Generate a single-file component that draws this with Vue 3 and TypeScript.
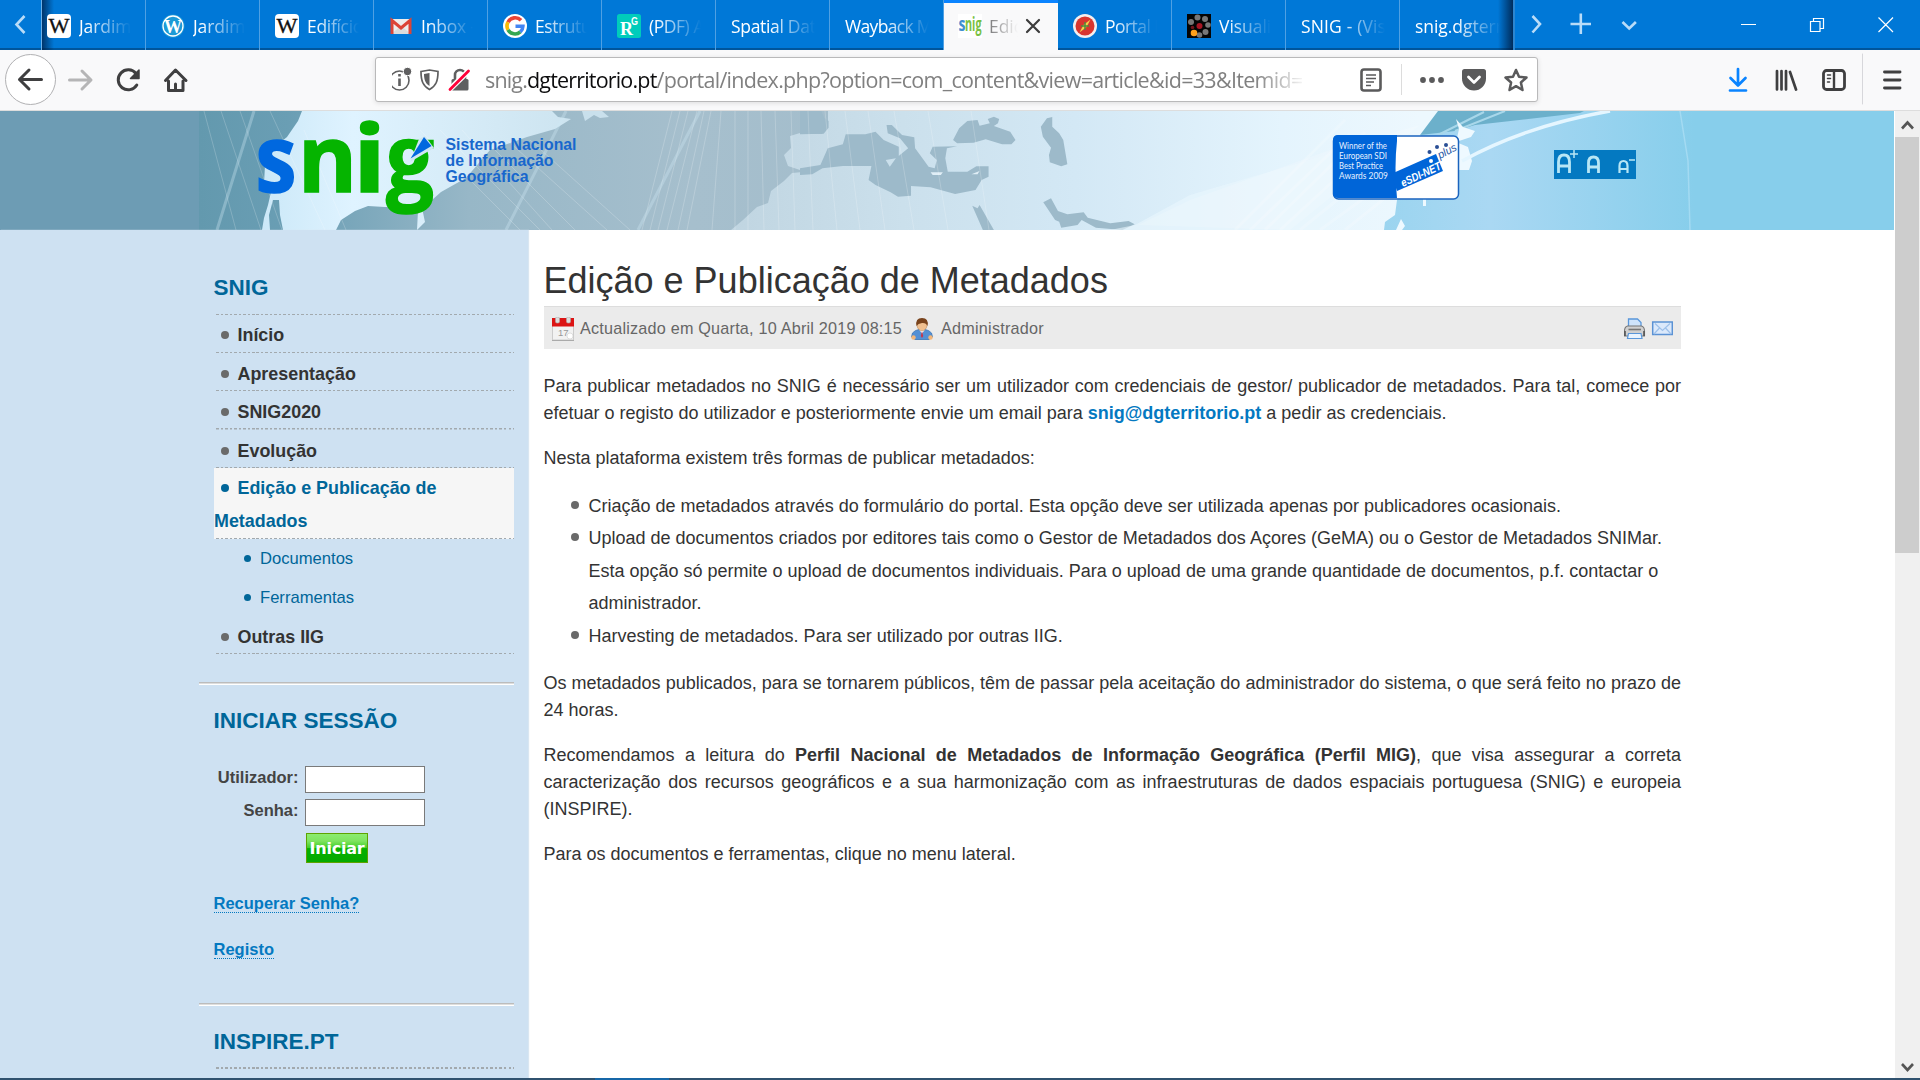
<script setup lang="ts">
import type { Directive } from 'vue'

interface Tab {
  title: string
  icon?: string
  active?: boolean
  w?: number
}

const tabs: Tab[] = [
  { title: 'Jardim B', icon: 'wiki', w: 68 },
  { title: 'Jardim B', icon: 'wp', w: 68 },
  { title: 'Edifício', icon: 'wiki', w: 56 },
  { title: 'Inbox - ', icon: 'gmail', w: 59 },
  { title: 'Estrutura', icon: 'google', w: 72 },
  { title: '(PDF) A', icon: 'rg', w: 55 },
  { title: 'Spatial Data', w: 94 },
  { title: 'Wayback Ma', w: 96 },
  { title: 'Ediç', icon: 'snig', active: true, w: 33 },
  { title: 'Portal N', icon: 'portal', w: 62 },
  { title: 'Visualiza', icon: 'vis', w: 70 },
  { title: 'SNIG - (Visu', w: 96 },
  { title: 'snig.dgterri', w: 92 },
]

const menu = ['Início', 'Apresentação', 'SNIG2020', 'Evolução']

// Spreads or tightens the letters so that a run of text takes the given width.
const vFit: Directive<HTMLElement, number | undefined> = {
  mounted(el, { value }) {
    if (!value) return
    const natural = el.getBoundingClientRect().width
    const count = (el.textContent ?? '').length
    if (count) el.style.letterSpacing = `${(value - natural) / count}px`
  },
}
</script>

<template>
  <div class="screen">
    <header class="tabbar">
      <div class="scroll-left">
        <svg width="41" height="48" viewBox="0 0 41 48"><path d="M24.500 16l-8 8.500 8 8.500" fill="none" stroke="#b9dcf8" stroke-width="2.600" /></svg>
      </div>
      <div class="tabs">
        <div v-for="(t, i) in tabs" :key="i" class="tab" :class="{ active: t.active, first: i === 0, last: i === tabs.length - 1 }">
          <svg v-if="t.icon" class="fav" width="24" height="24" viewBox="0 0 24 24">
            <g v-if="t.icon === 'wiki'">
              <rect width="24" height="24" rx="4" fill="#fff" />
              <text x="1.500" y="18.500" font-family="Liberation Serif, serif" font-size="20" textLength="21" lengthAdjust="spacingAndGlyphs" fill="#111" stroke="#111" stroke-width=".3">W</text>
            </g>
            <g v-else-if="t.icon === 'wp'">
              <circle cx="12" cy="12" r="11.500" fill="#1c9ad6" />
              <circle cx="12" cy="12" r="10" fill="none" stroke="#fff" stroke-width="1.300" />
              <text x="3" y="18.500" font-family="Liberation Serif, serif" font-weight="bold" font-size="18" textLength="18" lengthAdjust="spacingAndGlyphs" fill="#fff">W</text>
            </g>
            <g v-else-if="t.icon === 'gmail'">
              <rect x="2" y="5" width="20" height="15" fill="#eee" />
              <path d="M2 20l10-8 10 8z" fill="#dcdcdc" />
              <path d="M3 20V6.500l9 7.500 9-7.500V20" fill="none" stroke="#dc4437" stroke-width="3" />
            </g>
            <g v-else-if="t.icon === 'google'">
              <circle cx="12" cy="12" r="12" fill="#fff" />
              <g fill="none" stroke-width="3.600">
                <path d="M18 6.300A8 8 0 0 0 5 8.200" stroke="#ea4335" />
                <path d="M5 8.200a8 8 0 0 0 0 7.700" stroke="#fbbc05" />
                <path d="M5 15.900a8 8 0 0 0 12.300 2" stroke="#34a853" />
                <path d="M17.300 17.900A8 8 0 0 0 19.900 12.200H12.500" stroke="#4285f4" />
              </g>
            </g>
            <g v-else-if="t.icon === 'rg'">
              <rect width="24" height="24" rx="2.500" fill="#00ccbb" />
              <text x="3" y="21" font-family="Liberation Serif, serif" font-weight="bold" font-size="18" fill="#fff">R</text>
              <text x="14" y="10.500" font-family="Liberation Sans, sans-serif" font-weight="bold" font-size="10" textLength="7" lengthAdjust="spacingAndGlyphs" fill="#fff">G</text>
            </g>
            <g v-else-if="t.icon === 'snig'">
              <rect width="24" height="24" fill="#fff" />
              <text x=".5" y="17" font-family="Open Sans, sans-serif" font-weight="bold" font-size="20" textLength="7" lengthAdjust="spacingAndGlyphs" fill="#3f8fd0">s</text>
              <text x="7" y="17" font-family="Open Sans, sans-serif" font-weight="bold" font-size="20" textLength="16.500" lengthAdjust="spacingAndGlyphs" fill="#79c143">nig</text>
            </g>
            <g v-else-if="t.icon === 'portal'">
              <circle cx="12" cy="12" r="12" fill="#f4eeee" />
              <circle cx="12" cy="12" r="9.500" fill="#d8352f" />
              <path d="M17.500 5.500l-4 7.500-7 5.500 4-7.500z" fill="#f3d34a" />
              <path d="M12 8v8M8 12h8" stroke="#4f8c3b" stroke-width="1.500" />
            </g>
            <g v-else>
              <rect width="24" height="24" fill="#050505" />
              <g fill="#777">
                <circle cx="10.500" cy="3.500" r="3" /><circle cx="18" cy="5" r="3" /><circle cx="21" cy="11" r="2.800" />
                <circle cx="18.500" cy="18" r="3" /><circle cx="12.500" cy="21" r="2.800" /><circle cx="4" cy="8" r="3" />
              </g>
              <circle cx="12.500" cy="12" r="3" fill="#a81523" /><circle cx="5.500" cy="13.500" r="1.800" fill="#72141a" /><circle cx="7" cy="19" r="3.300" fill="#ffa11c" />
            </g>
          </svg>
          <span class="clip"><span v-fit="t.w" class="ttl">{{ t.title }}</span></span>
          <svg v-if="t.active" class="x" width="16" height="16" viewBox="0 0 16 16"><path d="M2 2l12 12M14 2L2 14" stroke="#3c3c3c" stroke-width="2.200" stroke-linecap="round" /></svg>
        </div>
      </div>
      <svg class="controls" width="405" height="48" viewBox="1515 0 405 48" fill="none">
        <g stroke="#b9dcf8" stroke-width="2.600">
          <path d="M1532.500 16l7.500 8-7.500 8.500M1570.500 24h20.500M1580.800 13.500v20.500" /><path d="M1622.500 22l6.700 6.500 6.700-6.500" />
        </g>
        <g stroke="#fff" stroke-width="1.200">
          <path d="M1741 24.500h15M1810.500 21.500h9.500v10h-9.500zM1813.500 21v-2.500h10v10h-3M1878.500 17.500l14.500 14.500M1893 17.500l-14.500 14.500" />
        </g>
      </svg>
    </header>

    <div class="toolbar">
      <svg class="nav" width="374" height="60" viewBox="0 50 374 60" fill="none">
        <circle cx="30.500" cy="79.500" r="25" fill="#fff" stroke="#b1b1b3" />
        <g stroke="#3f3f40" stroke-width="3" stroke-linecap="round" stroke-linejoin="round">
          <path d="M41.500 79.500H19.500M29 70l-9.500 9.500L29 89" />
          <path stroke="#b5b5b6" d="M69.500 80H90.500M82 71l9 9-9 9" />
          <path d="M136 73.500a10 10 0 1 0 .8 11.500" /><path d="M139 70v8.500h-8.500z" fill="#3f3f40" stroke-width="1.500" />
          <path d="M165.500 80.500l10-10.500 10.500 10.500M168.500 81v9.500h14.500V81M175.500 89v-5" />
        </g>
      </svg>
      <div class="urlbar">
        <svg width="84" height="44" viewBox="392.500 58 84 44" fill="none">
          <circle cx="400" cy="80.500" r="9.500" stroke="#5f5f60" stroke-width="1.600" />
          <path d="M400 78.500v7.500M400 74v2.600" stroke="#5f5f60" stroke-width="2.600" />
          <circle cx="408" cy="71.500" r="4.200" fill="#5f5f60" stroke="#fff" />
          <path d="M421.500 71.500l8.500-1.500 8.500 1.500c0 9.500-2 14.500-8.500 18-6.500-3.500-8.500-8.500-8.500-18z" stroke="#5f5f60" stroke-width="1.700" />
          <path d="M424.500 74l5.500-1v13c-4-2.500-5.500-6-5.500-12z" fill="#5f5f60" />
          <path d="M455.500 79v-4a5 5 0 0 1 10 0v4" stroke="#5f5f60" stroke-width="2.600" /><rect x="452" y="79" width="17" height="11.500" rx="1.500" fill="#5f5f60" />
          <path d="M450.500 89L469 71" stroke="#fff" stroke-width="5.500" /><path d="M450.500 89.500L469 71" stroke="#ff0039" stroke-width="2.800" stroke-linecap="round" />
        </svg>
        <div class="url"><span v-fit="42">snig.</span><span v-fit="129.5" class="host">dgterritorio.pt</span><span v-fit="646">/portal/index.php?option=com_content&amp;view=article&amp;id=33&amp;Itemid=</span></div>
        <svg class="actions" width="188" height="44" viewBox="1350 58 188 44" fill="none">
          <rect x="1361.500" y="69.500" width="19" height="21" rx="2.500" stroke="#5a5a5b" stroke-width="2.600" />
          <path d="M1366 75h10M1366 78.500h10M1366 82h8M1366 85.500h5" stroke="#5a5a5b" stroke-width="1.400" />
          <path d="M1401.500 64v31" stroke="#dcdcdc" />
          <g fill="#5a5a5b"><circle cx="1423" cy="80" r="2.900" /><circle cx="1432" cy="80" r="2.900" /><circle cx="1441" cy="80" r="2.900" /></g>
          <path d="M1464.500 69h19a2.500 2.500 0 0 1 2.500 2.500v7a12 12 0 0 1-24 0v-7a2.500 2.500 0 0 1 2.500-2.500z" fill="#5a5a5b" />
          <path d="M1468.500 77l5.500 5.500 5.500-5.500" stroke="#fff" stroke-width="2.800" stroke-linecap="round" stroke-linejoin="round" />
          <path d="M1516 70l3 6.700 7.500.8-5.600 5 1.600 7.500-6.500-3.800-6.500 3.800 1.600-7.500-5.600-5 7.500-.8z" stroke="#5a5a5b" stroke-width="2.500" stroke-linejoin="round" />
        </svg>
      </div>
      <svg width="200" height="60" viewBox="1720 50 200 60" fill="none" stroke-linecap="round">
        <path d="M1738 69v16M1730.500 78l7.500 7.500 7.500-7.500M1730 90.500h16" stroke="#0a84ff" stroke-width="2.700" stroke-linejoin="round" />
        <path d="M1777 71v18.500M1781.500 71v18.500M1786 71v18.500M1790 72l6 17.500" stroke="#3f3f40" stroke-width="2.700" />
        <rect x="1823.500" y="70.500" width="21" height="19" rx="3" stroke="#3f3f40" stroke-width="2.800" /><path d="M1834 71v18" stroke="#3f3f40" stroke-width="2.400" /><path d="M1827.500 75h3M1827.500 78.500h3M1827.500 82h2" stroke="#3f3f40" stroke-width="1.500" />
        <path d="M1862.500 54v50" stroke="#d7d7db" />
        <path d="M1884.500 72h15.500M1884.500 80h15.500M1884.500 88h15.500" stroke="#3f3f40" stroke-width="2.900" />
      </svg>
    </div>

    <div class="viewport">
      <div class="page">
        <svg class="banner" width="1894" height="119" viewBox="0 111 1894 119">
          <defs>
            <linearGradient id="sea" gradientUnits="userSpaceOnUse" x1="199" x2="1695" y1="0" y2="0">
              <stop offset="0" stop-color="#6399ae" /><stop offset=".06" stop-color="#6a9eb4" /><stop offset=".18" stop-color="#97b7c7" /><stop offset=".33" stop-color="#a6bfcd" /><stop offset=".5" stop-color="#a2bccb" /><stop offset="1" stop-color="#a2bccb" />
            </linearGradient>
            <linearGradient id="asia" gradientUnits="userSpaceOnUse" x1="730" x2="1420" y1="0" y2="0">
              <stop offset="0" stop-color="#c0d5e1" /><stop offset=".25" stop-color="#cbe0ec" /><stop offset=".5" stop-color="#d3e8f5" /><stop offset=".8" stop-color="#e4f4fd" /><stop offset="1" stop-color="#edf8fe" />
            </linearGradient>
            <linearGradient id="america" gradientUnits="userSpaceOnUse" x1="260" x2="570" y1="0" y2="0">
              <stop offset="0" stop-color="#cbe8f8" /><stop offset=".3" stop-color="#dff3ff" /><stop offset="1" stop-color="#cde4f0" />
            </linearGradient>
            <linearGradient id="pacific" gradientUnits="userSpaceOnUse" x1="1380" x2="1695" y1="0" y2="0">
              <stop offset="0" stop-color="#9ad4ef" /><stop offset=".35" stop-color="#aad8f3" /><stop offset="1" stop-color="#87ceeb" />
            </linearGradient>
            <clipPath id="art"><rect x="199" y="111" width="1496" height="119" /></clipPath>
          </defs>
          <rect y="111" width="199" height="119" fill="#6d9cb4" />
          <rect x="1694" y="111" width="200" height="119" fill="#87ceeb" />
          <g clip-path="url(#art)">
            <rect x="199" y="111" width="1496" height="119" fill="url(#sea)" />
            <path d="M302 111L298 121 287 137 276 146 265 165 264 184 271 192 268 205 264 218 262 230H270L269 215 273 200 279 200 280 215 283 230H336L341 220 355 211 368 206 385 207 405 207 418 211 417 230 425 222 422 208 432 200 441 192 466 178 490 150 527 137 555 129 571 119 558 117 552 111z" fill="url(#america)" />
            <path d="M582 111h20l7 6-9 1-6-3-9 6z" fill="#c9e0ec" />
            <path d="M828 111H1442L1438 120 1420 138 1402 200 1396 230H731L743 220 757 207 768 203 771 191 784 181 792 173 803 172 820 168 800 170 788 166 784 155 791 148 790 136 800 133 822 134 828 126z" fill="url(#asia)" />
            <g transform="translate(800 105) scale(.40816 .33333)" fill="#9dbaca">
              <path d="M0 18H52L60 40 70 48V68L58 86 0 88z" />
              <path d="M0 190L50 180 68 130 105 118 112 88H160L185 80 205 105 242 125V158L210 165 220 185 235 160 265 130 245 100 215 85 212 60 225 60 250 90 280 97 282 130 300 160 315 185 330 190 335 165 318 145 325 125 385 124 360 130 356 160 362 200 410 200 432 184 462 184V215L445 225 430 255 380 267 320 247 272 243V272L240 275 222 262 185 240 168 225 175 183H105L55 190 30 208 0 210z" />
              <path d="M375 105L390 70 410 48 435 45 440 62 465 55 460 42 475 35 488 42 485 55 475 63 515 80 528 105 518 118 495 118 455 103 425 113 385 115z" />
              <path d="M590 65L605 40 618 36V65L635 85 645 105 655 178 640 184 612 172 610 150 615 128 595 95z" />
              <path d="M422 302L435 310 440 300 475 375H448zM596 292L615 280 632 318 655 328 695 322 705 338 760 355 805 348 820 358 790 375 725 368 690 345 680 360 640 368 635 350 625 345z" />
              <path d="M320 202h30l-5 8h-20zM420 208l20-10-5 10z" fill="#e0eef6" />
            </g>
            <path d="M1110 230L1135 225 1190 195 1330 154V230z" fill="#eaf6fd" opacity=".6" />
            <path d="M1138 225L1190 200 1330 150 1420 125 1290 230z" fill="#fff" opacity=".16" />
            <path d="M1442 111L1438 120 1420 136 1425 160 1413 180 1397 200 1395 215 1385 222 1384 230H1695V111z" fill="url(#pacific)" />
            <path d="M1438 111L1420 135 1455 131 1475 125 1580 113 1584 111z" fill="#6cb0cb" />
            <path d="M1438 135L1484 112M1455 131L1505 111" stroke="#a8d7ea" stroke-width="2" />
            <path d="M1456 119l7 8 12 4-4 6-15 5 12 5 4 14-3 9-16 0 2-23 4-18z" fill="#eef9ff" />
            <path d="M1462 161Q1525 126 1610 111" fill="none" stroke="#e5f6ff" stroke-width="3.500" />
            <path d="M1401 219l4 7-3 4h-6zM1423 199h3v7h-3z" fill="#eef9ff" />
            <g fill="none" stroke="#fff" opacity=".2">
              <path d="M204 111l32 119M221 111l40 119M240 111l42 119M270 111l55 119M304 130l42 100M420 130l100 100M440 130l100 100M462 130l90 100M485 140l90 90M507 140l100 90M530 140l100 90" />
              <path d="M672 111l-30 119M680 111l-30 119M688 111l-30 119M697 111l-30 119M704 111l-26 119M711 111l-24 119M721 111l-9 119M735 111v119M748 111v119M761 111l3 119M775 111l4 119M791 111l4 119M808 111l5 119M825 111l12 119M845 111l15 119M868 111l17 119M894 111l20 119M928 111l20 119M971 111l18 119" />
              <path d="M1235 230l110-110M1250 230l100-96M1265 230l100-98M1280 230l100-92M1300 230l94-76M1320 230l76-55M1345 230l50-40" stroke="#fff" stroke-width="3" />
            </g>
            <path d="M254 111l-37 119M700 111l-62 119M506 230l60-119" stroke="#cfe8f4" stroke-width="3" opacity=".35" />
            <path d="M1680 111l8 50 2 69" fill="none" stroke="#b6e2f6" stroke-width="1.500" opacity=".6" />
          </g>
          <g font-family="Open Sans, sans-serif" font-weight="bold" font-size="94" stroke-width="1.600">
            <text x="255.500" y="191.500" textLength="41" lengthAdjust="spacingAndGlyphs" fill="#0068df" stroke="#0068df">s</text>
            <g fill="#05b400" stroke="#05b400">
              <text x="298" y="191.500" textLength="59" lengthAdjust="spacingAndGlyphs">n</text>
              <text x="353" y="191.500" textLength="33" lengthAdjust="spacingAndGlyphs">i</text>
              <text x="386" y="191.500" textLength="48" lengthAdjust="spacingAndGlyphs">g</text>
            </g>
          </g>
          <path d="M419 139l6-3 9 12-24 14z" fill="#cfe6f3" />
          <path d="M424 137l7.500 9-21 12.500z" fill="#0068df" />
          <g font-family="Liberation Sans, Arial, sans-serif" font-weight="bold" font-size="16.800" fill="#1867cd">
            <text x="445.500" y="150" textLength="131" lengthAdjust="spacingAndGlyphs">Sistema Nacional</text>
            <text x="445.500" y="166.200" textLength="108" lengthAdjust="spacingAndGlyphs">de Informação</text>
            <text x="445.500" y="181.800" textLength="83" lengthAdjust="spacingAndGlyphs">Geográfica</text>
          </g>
          <rect x="1333.500" y="136" width="125" height="63" rx="5" fill="#fff" stroke="#1a63be" stroke-width="1.500" />
          <path d="M1338 135h59v6q-3 26 0 57h-59q-5 0-5-5v-53q0-5 5-5z" fill="#0065d8" />
          <g font-family="Lato, sans-serif" font-size="9" fill="#e6f1ff">
            <text x="1339" y="149" textLength="48" lengthAdjust="spacingAndGlyphs">Winner of the</text>
            <text x="1339" y="159.300" textLength="48" lengthAdjust="spacingAndGlyphs">European SDI</text>
            <text x="1339" y="169.300" textLength="44" lengthAdjust="spacingAndGlyphs">Best Practice</text>
            <text x="1339" y="179" textLength="49" lengthAdjust="spacingAndGlyphs">Awards 2009</text>
          </g>
          <path d="M1391 174l45-20 7 17-46 20z" fill="#0065d8" />
          <g font-family="Liberation Sans, Arial, sans-serif" font-weight="bold" font-style="italic">
            <text transform="translate(1403 187) rotate(-25)" font-size="11.500" textLength="43" lengthAdjust="spacingAndGlyphs" fill="#fff">eSDI-NET</text>
            <text transform="translate(1440 159) rotate(-28)" font-size="11" textLength="20" lengthAdjust="spacingAndGlyphs" fill="#2b5aa6" font-weight="normal">plus</text>
          </g>
          <g fill="#2a4f95"><circle cx="1429.500" cy="152" r="2" /><circle cx="1437" cy="147" r="2" /><circle cx="1446" cy="145" r="2" /><circle cx="1431" cy="161" r="2" fill="#fff" /></g>
          <rect x="1554" y="150" width="82" height="29" fill="#0479c1" />
          <g fill="none" stroke="#b8e6f5" stroke-width="2.800">
            <path d="M1558.500 173v-11q0-7 5.500-7t5.500 7v11M1558.500 166h11" />
            <path d="M1588.500 173v-10q0-6 5-6t5 6v10M1588.500 167h10" />
            <path d="M1619.500 173v-7q0-5 4-5t4 5v7M1619.500 169h8" stroke-width="2.200" />
            <path d="M1570 154h8M1574 150v8M1629 160h6" stroke-width="1.500" />
          </g>
        </svg>

        <div class="columns">
          <aside class="side">
            <h3 class="mh top">SNIG</h3>
            <ul class="menu">
              <li v-for="m in menu" :key="m">{{ m }}</li>
              <li class="current">Edição e Publicação de Metadados</li>
              <li class="sub">Documentos</li>
              <li class="sub">Ferramentas</li>
              <li>Outras IIG</li>
            </ul>
            <div class="rule"></div>
            <h3 class="mh">INICIAR SESSÃO</h3>
            <form class="login" @submit.prevent>
              <label for="user">Utilizador:</label><input id="user" type="text">
              <label for="pass">Senha:</label><input id="pass" type="password">
              <button type="submit"><span v-fit="55">Iniciar</span></button>
            </form>
            <p class="lnk"><a>Recuperar Senha?</a></p>
            <p class="lnk"><a>Registo</a></p>
            <div class="rule second"></div>
            <h3 class="mh">INSPIRE.PT</h3>
            <div class="dots"></div>
          </aside>
          <main class="main">
            <h1>Edição e Publicação de Metadados</h1>
            <div class="meta">
              <svg width="22" height="24" viewBox="0 0 22 24">
                <rect x=".5" y="2" width="21" height="21" fill="#f2f2f2" stroke="#ccc" /><rect y="1" width="22" height="8.500" fill="#dc1414" /><path d="M0 23.500h22" stroke="#aaa" />
                <rect x="3.500" width="4" height="6" rx="1.500" fill="#ddd" stroke="#aaa" stroke-width=".6" /><rect x="14.500" width="4" height="6" rx="1.500" fill="#ddd" stroke="#aaa" stroke-width=".6" />
                <text x="6" y="19" font-family="Liberation Sans, sans-serif" font-size="9.500" fill="#999">17</text>
                <circle cx="18" cy="19" r="3" fill="#fff" stroke="#ccc" stroke-width=".6" />
              </svg>
              <span v-fit="322" class="date">Actualizado em Quarta, 10 Abril 2019 08:15</span>
              <svg class="person" width="22" height="22" viewBox="0 0 22 22">
                <path d="M1.500 15Q4 12 8 11.500h6q4 .5 6.500 3.500l1 4-3.500 2.500H4L.5 19z" fill="#5490d4" stroke="#3a74b4" stroke-width=".8" /><path d="M8 11.500l3 4 3-4z" fill="#fff" /><path d="M11 13l1.200 5-1.200 2-1.200-2z" fill="#c8374a" />
                <ellipse cx="11" cy="7" rx="5" ry="5.800" fill="#f0c090" stroke="#b77b45" stroke-width=".5" /><path d="M5.500 8Q4 0 11 0t5.500 8Q15 4.500 11 5T5.500 8z" fill="#79431c" /><circle cx="2.500" cy="19.500" r="2.200" fill="#f3b679" /><circle cx="19.500" cy="19.500" r="2.200" fill="#f3b679" />
              </svg>
              <span v-fit="103">Administrador</span>
              <svg class="print" width="49" height="22" viewBox="0 0 49 22">
                <path d="M4.500 9V1h9l3.500 3.500V9" fill="#cfe4fb" stroke="#5a97da" stroke-width="1.300" /><path d="M3.500 8h14q3 1 3 5v5h-20v-5q0-4 3-5z" fill="#d0d0d0" stroke="#777" stroke-width="1.100" />
                <path d="M1 13v5M20 13v5" stroke="#555" stroke-width="1.600" /><path d="M4.500 11.500h12.500" stroke="#777" stroke-width="1.600" /><path d="M4.500 15.500h12.500l1 5H3.500z" fill="#e9f4ff" stroke="#5a97da" stroke-width="1.200" />
                <rect x="28.700" y="4" width="19.600" height="12.500" fill="#dbe9fb" stroke="#5b92d4" stroke-width="1.500" /><path d="M31 5.500l7.500 7 7.500-7M30 16l5.500-6M47 16l-5.500-6" fill="none" stroke="#9dc0ea" stroke-width="1.200" />
              </svg>
            </div>
            <p class="p1">Para publicar metadados no SNIG é necessário ser um utilizador com credenciais de gestor/ publicador de metadados. Para tal, comece por efetuar o registo do utilizador e posteriormente envie um email para <a class="mail">snig@dgterritorio.pt</a> a pedir as credenciais.</p>
            <p>Nesta plataforma existem três formas de publicar metadados:</p>
            <ul class="list">
              <li>Criação de metadados através do formulário do portal. Esta opção deve ser utilizada apenas por publicadores ocasionais.</li>
              <li>Upload de documentos criados por editores tais como o Gestor de Metadados dos Açores (GeMA) ou o Gestor de Metadados SNIMar.<br>Esta opção só permite o upload de documentos individuais. Para o upload de uma grande quantidade de documentos, p.f. contactar o<br>administrador.</li>
              <li>Harvesting de metadados. Para ser utilizado por outras IIG.</li>
            </ul>
            <p>Os metadados publicados, para se tornarem públicos, têm de passar pela aceitação do administrador do sistema, o que será feito no prazo de 24 horas.</p>
            <p>Recomendamos a leitura do <b>Perfil Nacional de Metadados de Informação Geográfica (Perfil MIG)</b>, que visa assegurar a correta caracterização dos recursos geográficos e a sua harmonização com as infraestruturas de dados espaciais portuguesa (SNIG) e europeia (INSPIRE).</p>
            <p>Para os documentos e ferramentas, clique no menu lateral.</p>
          </main>
        </div>
      </div>
      <div class="scrollbar">
        <svg width="25" height="26" viewBox="0 0 25 26"><path d="M7 17.500l5.500-6 5.500 6" fill="none" stroke="#555" stroke-width="2.600" /></svg>
        <div class="thumb"></div>
        <svg width="25" height="26" viewBox="0 0 25 26"><path d="M7 12l5.500 6 5.500-6" fill="none" stroke="#555" stroke-width="2.600" /></svg>
      </div>
    </div>
    <footer class="taskbar"><span></span></footer>
  </div>
</template>

<style>
body { margin: 0; overflow: hidden; }
</style>

<style scoped>
* { box-sizing: border-box; }
svg { display: block; flex: none; }
.screen { width: 1920px; height: 1080px; overflow: hidden; display: flex; flex-direction: column; background: #fff; font-family: "Liberation Sans", Arial, sans-serif; color: #333; }
.tabbar { height: 50px; flex: none; display: flex; background: #0078d7; box-shadow: inset 0 -2px #00559b; }
.scroll-left { width: 42px; border-right: 1px solid #6cb0e8; }
.tabs { width: 1473px; display: flex; overflow: hidden; border-right: 2px solid #2c86d0; }
.tab { width: 114px; flex: none; height: 50px; padding: 2px 14px 0 15px; display: flex; align-items: center; gap: 8px; border-right: 1px solid #4fa0e3; font: 17.5px/24px "Open Sans", "Noto Sans", sans-serif; color: #fff; }
.tab.first { width: 104px; padding-left: 5px; background: linear-gradient(90deg, rgba(0, 30, 70, .75), rgba(0, 30, 70, 0) 12px); }
.tab.last { flex: 1; border-right: 0; background: linear-gradient(270deg, rgba(0, 25, 60, .85), rgba(0, 30, 70, 0) 16px); }
.tab.active { background: #f9f9fa; border-top: 3px solid #0a84ff; color: #333; padding: 0 17px 1px 14px; gap: 7px; border-right: 0; }
.clip { flex: 1; overflow: hidden; white-space: pre; -webkit-mask-image: linear-gradient(90deg, #000 calc(100% - 45px), transparent); mask-image: linear-gradient(90deg, #000 calc(100% - 45px), transparent); }
.ttl { display: inline-block; }
.toolbar { height: 61px; flex: none; display: flex; background: #f9f9fa; border-bottom: 1px solid #ddd; }
.urlbar { margin: 7px 182px 0 1px; width: 1163px; height: 45px; display: flex; align-items: center; background: #fff; border: 1px solid #b9b9ba; border-radius: 3px; box-shadow: 0 1px 5px rgba(0, 0, 0, .12); padding-left: 16px; }
.url { flex: 1; min-width: 0; margin-left: 9px; overflow: hidden; white-space: nowrap; font: 21.5px/36px "Open Sans", "Noto Sans", sans-serif; color: #808080; -webkit-mask-image: linear-gradient(90deg, #000 770px, transparent 822px); mask-image: linear-gradient(90deg, #000 770px, transparent 822px); }
.url span { display: inline-block; }
.url .host { color: #0c0c0d; }
.actions { margin-right: -1px; }
.viewport { height: 967px; flex: none; display: flex; justify-content: space-between; }
.page { width: 1894px; }
.columns { display: flex; height: 848px; }
.side { width: 528px; background: #cee1f2; padding: 0 13px 0 214px; box-shadow: 1px 0 1px #d9e6f1; overflow: hidden; }
.mh { margin: 20.100px 0 0 -.5px; font-size: 22.500px; line-height: 32px; color: #069; }
.mh.top { margin-top: 42.300px; margin-bottom: 9.700px; }
.menu, .list { list-style: none; margin: 0; padding: 0; }
.menu li { position: relative; width: 300px; height: 38.4px; padding: 3px 0 0 23.500px; font-size: 17.900px; font-weight: bold; line-height: 36px; background: repeating-linear-gradient(90deg, transparent 0 2px, #a2a9ae 2px 4.5px) 0 100% / 100% 1.500px no-repeat; }
.menu li:first-child { height: 39px; background: repeating-linear-gradient(90deg, transparent 0 2px, #a2a9ae 2px 4.5px) 0 0 / 100% 1px no-repeat, repeating-linear-gradient(90deg, transparent 0 2px, #a2a9ae 2px 4.5px) 0 100% / 100% 1px no-repeat; }
.menu li::before { content: ""; position: absolute; left: 6.5px; top: 17px; width: 8px; height: 8px; border-radius: 50%; background: #6a6a6a; }
.menu .current { height: 71px; padding: 4px 0 0; text-indent: 23.500px; line-height: 33px; color: #069; background: repeating-linear-gradient(90deg, transparent 0 2px, #a2a9ae 2px 4.5px) 0 100% / 100% 1px no-repeat, #f6f6f6; }
.menu .current::before { background: #069; top: 16px; }
.menu .sub { padding: 2px 0 0 46px; font-size: 16.600px; font-weight: normal; color: #069; background: none; }
.menu .sub::before { left: 30px; top: 16px; width: 7px; height: 7px; background: #069; }
.rule { width: 315px; height: 3px; margin: 27.500px 0 0 -15px; background: linear-gradient(#bcbcbc 1px, #ddd 1px 2px, #fff 2px); }
.rule.second { margin-top: 31px; }
.login { display: grid; grid-template-columns: 84.500px 120px; column-gap: 6.500px; row-gap: 6px; margin-top: 29.400px; height: 113.700px; align-content: start; }
.login label { text-align: right; font-size: 16.500px; font-weight: bold; line-height: 22.500px; color: #444; }
.login input { width: 120px; height: 27px; border: 1px solid #7a7a7a; background: #fff; padding: 0; }
.login button { grid-column: 2; width: 62px; height: 30px; margin: 1px 0 0 1px; padding: 0; border: 1px solid #5ea300; background: linear-gradient(#8cec70, #7fe45f 25%, #3fcd26 50%, #05b000 52%, #05a900); color: #fff; font: bold 16px/27px "DejaVu Sans", Verdana, sans-serif; white-space: nowrap; }
.login button span { display: inline-block; }
.lnk { margin: 0 0 0 -.5px; height: 46px; font-size: 16.500px; font-weight: bold; line-height: 46px; color: #0479c1; }
.lnk a { border-bottom: 1px dotted #0479c1; }
.dots { width: 300px; height: 2px; margin-top: 9px; background: repeating-linear-gradient(90deg, transparent 0 2px, #a2a9ae 2px 4.5px); }
.main { width: 1153px; padding: 31px 0 0 15.500px; font-size: 18px; line-height: 27px; }
h1 { margin: 0 0 5px; font-size: 36px; font-weight: normal; line-height: 40px; }
.meta { width: 1137.500px; height: 43px; border-top: 1px solid #ddd; background: #ebebeb; display: flex; align-items: center; padding: 1px 8px 0; font-size: 16.200px; line-height: 24px; color: #666; white-space: nowrap; }
.meta span { margin-top: -2px; }
.date { margin-left: 6.500px; }
.person { margin: 0 8px 0 9px; }
.print { margin: 0 0 0 auto; }
p { margin: 0 0 18px; text-align: justify; }
.p1 { margin-top: 24px; }
.mail { color: #0479c1; font-weight: bold; }
.list { padding-left: 45px; line-height: 32.4px; margin-bottom: 18px; white-space: nowrap; }
.list li { position: relative; }
.list li::before { content: ""; position: absolute; left: -18px; top: 11px; width: 8px; height: 8px; border-radius: 50%; background: #6a6a6a; }
.scrollbar { width: 25px; background: #f0f0f0; display: flex; flex-direction: column; }
.thumb { width: 24px; height: 416px; margin-bottom: 499px; background: #cdcdcd; }
.taskbar { height: 2px; flex: none; background: #30526f; padding-left: 595px; }
.taskbar span { display: block; width: 74px; height: 2px; background: #1767a8; }
</style>
